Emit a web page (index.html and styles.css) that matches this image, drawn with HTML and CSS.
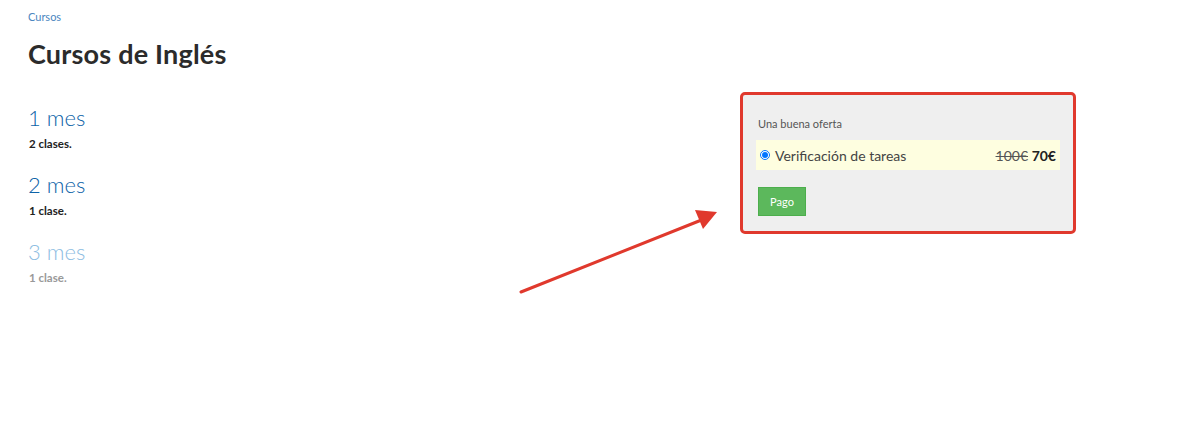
FILE: index.html
```html
<!DOCTYPE html>
<html lang="es">
<head>
    <meta charset="UTF-8">
    <title>Cursos de Inglés</title>
    <link rel="stylesheet" href="styles.css">
</head>
<body>
    <div class="page">
        <a class="breadcrumb" href="#">Cursos</a>
        <h1>Cursos de Inglés</h1>

        <div class="row">
            <div class="plans">
                <div class="plan">
                    <div class="plan-title">1 mes</div>
                    <div class="plan-note">2 clases.</div>
                </div>
                <div class="plan">
                    <div class="plan-title">2 mes</div>
                    <div class="plan-note">1 clase.</div>
                </div>
                <div class="plan plan-disabled">
                    <div class="plan-title">3 mes</div>
                    <div class="plan-note">1 clase.</div>
                </div>
            </div>

            <div class="offer">
                <p class="offer-label">Una buena oferta</p>
                <label class="offer-option">
                    <input type="radio" name="offer" checked>
                    <span class="offer-name">Verificación de tareas</span>
                    <span class="offer-price"><s>100€</s> <b>70€</b></span>
                </label>
                <button class="pay-button">Pago</button>
            </div>
        </div>
    </div>

    <svg class="arrow" width="1199" height="438" viewBox="0 0 1199 438">
        <line x1="521" y1="292" x2="704" y2="219" stroke="#e0392d" stroke-width="3" stroke-linecap="round"/>
        <polygon points="717,212 695,210 703,229" fill="#e0392d"/>
    </svg>
</body>
</html>
```

FILE: styles.css
```css
body {
    margin: 0;
    font-family: Lato, "Open Sans", Arial, sans-serif;
    color: #333;
    background-color: #fff;
}
.page {
    padding: 10px 28px 0 28px;
}
.breadcrumb {
    display: block;
    font-size: 11px;
    color: #4a86c0;
    text-decoration: none;
    line-height: 14px;
}
h1 {
    margin: 15px 0 0 0;
    font-size: 27px;
    font-weight: 700;
    line-height: 30px;
    color: #2b2b2b;
    letter-spacing: 0.2px;
}
.row {
    display: flex;
    justify-content: space-between;
    align-items: flex-start;
}
.plans {
    padding-top: 36px;
}
.plan {
    margin-bottom: 21px;
}
.plan-title {
    font-size: 22px;
    font-weight: 300;
    color: #0d63a8;
    line-height: 26px;
}
.plan-note {
    font-size: 11.5px;
    font-weight: 700;
    color: #222;
    line-height: 14px;
    margin-top: 6px;
    padding-left: 1px;
}
.plan-disabled .plan-title {
    color: #8dbde2;
}
.plan-disabled .plan-note {
    color: #999;
}
.offer {
    margin-top: 23px;
    margin-right: 95px;
    width: 304px;
    padding: 22px 13px 15px 13px;
    background-color: #efefef;
    border: 3px solid #e0392d;
    border-radius: 5px;
}
.offer-label {
    margin: 0 0 9px 2px;
    font-size: 11px;
    color: #555;
    line-height: 14px;
}
.offer-option {
    display: flex;
    align-items: center;
    height: 30px;
    padding: 0 4px;
    background-color: #fefee0;
    font-size: 14px;
    color: #444;
}
.offer-option input {
    margin: 0 5px 0 0;
    width: 10px;
    height: 10px;
}
.offer-name {
    flex-grow: 1;
}
.offer-price s {
    color: #555;
}
.offer-price b {
    color: #222;
}
.pay-button {
    margin: 17px 0 0 2px;
    width: 48px;
    height: 29px;
    padding: 0;
    background-color: #5cb85c;
    color: white;
    border: 1px solid #4cae4c;
    font-family: inherit;
    font-size: 11px;
    cursor: pointer;
}
.arrow {
    position: absolute;
    left: 0;
    top: 0;
    pointer-events: none;
}
```
